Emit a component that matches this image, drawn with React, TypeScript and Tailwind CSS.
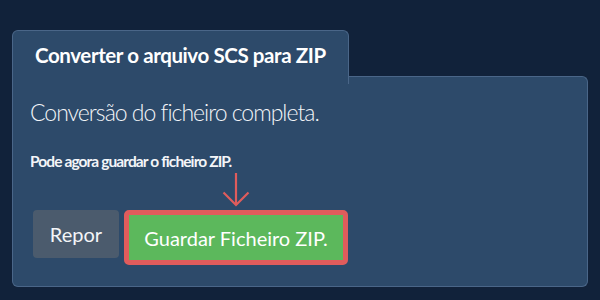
export default function App() {
  return (
    <div
      className="w-[600px] h-[300px] bg-[#11223a] pt-[30px] px-[12px] text-[#f3f5f8]"
      style={{ fontFamily: 'Lato, "Noto Sans", sans-serif' }}
    >
      <div className="w-[576px] flex flex-col">
        <div className="flex h-[54px]">
          <div className="w-[337px] h-[54px] bg-[#2d4a6a] border-l border-t border-r border-[#4a6688] rounded-t-[6px] pl-[22px] pt-[12px]">
            <div className="text-[20.5px] font-bold leading-[24px] tracking-[-0.4px] text-white">Converter o arquivo SCS para ZIP</div>
          </div>
          <div className="flex-1 self-end h-[8px] bg-[#2d4a6a] border-t border-r border-[#4a6688] rounded-tr-[6px]"></div>
        </div>
        <div className="h-[203px] bg-[#2d4a6a] border-l border-r border-b border-[#4a6688] rounded-b-[6px] pl-[17px] pt-[14px]">
          <div className="text-[23px] font-light leading-[29px] tracking-[-1px]">Conversão do ficheiro completa.</div>
          <div className="mt-[24px] text-[15.5px] font-bold leading-[20px] tracking-[-0.9px]">Pode agora guardar o ficheiro ZIP.</div>
          <div className="mt-[39px] flex items-start gap-[5px] pl-[3px]">
            <button className="w-[86px] h-[48px] rounded-[4px] bg-[#4b5b6d] text-[20px] text-[#f3f5f8]">Repor</button>
            <div className="relative">
              <svg
                className="absolute left-1/2 -translate-x-1/2 bottom-full mb-[3px]"
                width="30"
                height="36"
                viewBox="0 0 30 36"
                fill="none"
                stroke="#e05c5c"
                strokeWidth="2.2"
              >
                <line x1="15" y1="2" x2="15" y2="34" />
                <polyline points="2.5,21.5 15,34 27.5,21.5" />
              </svg>
              <button className="w-[224px] h-[55px] rounded-[5px] border-[5px] border-[#e05c5c] bg-[#5cb85c] text-[20px] text-white">
                Guardar Ficheiro ZIP.
              </button>
            </div>
          </div>
        </div>
      </div>
    </div>
  );
}
